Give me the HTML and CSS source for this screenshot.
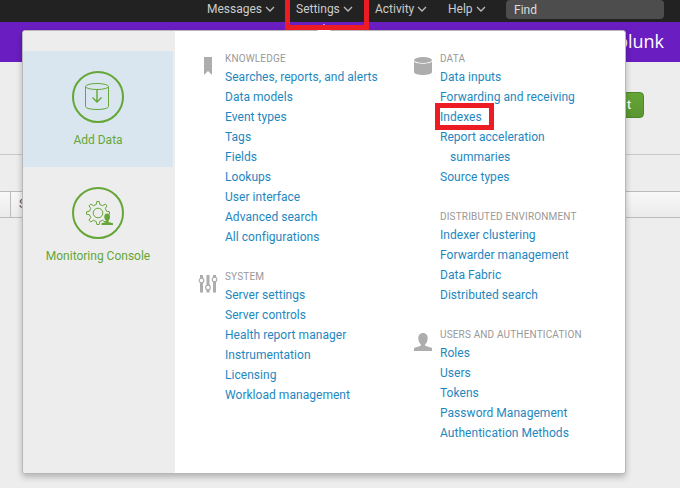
FILE: index.html
```html
<!DOCTYPE html>
<html lang="en">
<head>
<meta charset="utf-8">
<title>Settings</title>
<link rel="stylesheet" href="styles.css">
</head>
<body>
<nav class="topbar">
  <a class="nav-item messages">Messages<svg class="chevron" viewBox="0 0 10 6"><path d="M1 1l4 4 4-4"/></svg></a>
  <a class="nav-item settings">Settings<svg class="chevron" viewBox="0 0 10 6"><path d="M1 1l4 4 4-4"/></svg></a>
  <a class="nav-item activity">Activity<svg class="chevron" viewBox="0 0 10 6"><path d="M1 1l4 4 4-4"/></svg></a>
  <a class="nav-item help">Help<svg class="chevron" viewBox="0 0 10 6"><path d="M1 1l4 4 4-4"/></svg></a>
  <div class="find">Find</div>
</nav>
<header class="appbar">plunk</header>
<section class="toolbar"><button class="action">t</button></section>
<div class="table-head"><span class="cell-first"></span><span class="cell">S</span></div>

<div class="menu">
  <aside class="side">
    <a class="tile active">
      <svg class="tile-icon" viewBox="0 0 52 52"><circle class="ring" cx="26" cy="26" r="25"/><g class="thin"><ellipse cx="25" cy="15.5" rx="11.5" ry="3"/><path d="M13.5 15.500v20c0 4 23 4 23 0v-20"/></g><path class="mid" d="M25 18.500v12M20.500 26.500l4.500 4.500 4.500-4.500"/></svg>
      <span>Add Data</span>
    </a>
    <a class="tile">
      <svg class="tile-icon" viewBox="0 0 52 52"><circle class="ring" cx="26" cy="26" r="25"/><g class="thin"><path d="M24.200 17.500l.6-3h2.400l.6 3 2.800 1.200 2.600-1.700 1.800 1.800-1.700 2.600 1.200 2.800 3 .6v2.400l-3 .6-1.200 2.800 1.700 2.600-1.800 1.800-2.600-1.700-2.800 1.200-.6 3h-2.400l-.6-3-2.800-1.200-2.600 1.700-1.800-1.800 1.700-2.600-1.200-2.800-3-.6v-2.400l3-.6 1.200-2.800-1.700-2.600 1.800-1.800 2.600 1.700z"/><circle cx="26" cy="26" r="4.800"/></g><path class="person" d="M32.300 29.500c0-4 5.700-4 5.700 0 0 2-.6 3.500-1.500 4.300v1.200l4.500 1.200V38H29.500v-1.800l4.500-1.200v-1.200c-1-.8-1.700-2.300-1.700-4.300z"/></svg>
      <span>Monitoring Console</span>
    </a>
  </aside>
  <div class="column">
    <section class="group">
      <svg class="group-icon" viewBox="0 0 20 20"><path d="M6 1h8v18l-4-4-4 4z"/></svg>
      <div class="links">
        <h2>KNOWLEDGE</h2>
        <a>Searches, reports, and alerts</a><a>Data models</a><a>Event types</a><a>Tags</a><a>Fields</a><a>Lookups</a><a>User interface</a><a>Advanced search</a><a>All configurations</a>
      </div>
    </section>
    <section class="group">
      <svg class="group-icon" viewBox="0 0 20 20"><path d="M2 1h3v17.500H2zM8.500 1h3v17.500h-3zM15 1h3v17.500h-3z"/><g class="knob"><circle cx="3.500" cy="6.500" r="2.300"/><circle cx="10" cy="13.500" r="2.300"/><circle cx="16.500" cy="5.500" r="2.300"/></g></svg>
      <div class="links">
        <h2>SYSTEM</h2>
        <a>Server settings</a><a>Server controls</a><a>Health report manager</a><a>Instrumentation</a><a>Licensing</a><a>Workload management</a>
      </div>
    </section>
  </div>
  <div class="column">
    <section class="group">
      <svg class="group-icon" viewBox="0 0 20 20"><ellipse cx="10" cy="4" rx="9" ry="3"/><path d="M1 5.600c2 2.900 16 2.900 18 0V16c0 4-18 4-18 0z"/></svg>
      <div class="links">
        <h2>DATA</h2>
        <a>Data inputs</a><a>Forwarding and receiving</a><a class="marked">Indexes</a><a>Report acceleration</a><a class="wrapped">summaries</a><a>Source types</a>
      </div>
    </section>
    <section class="group">
      <span class="group-icon"></span>
      <div class="links">
        <h2>DISTRIBUTED ENVIRONMENT</h2>
        <a>Indexer clustering</a><a>Forwarder management</a><a>Data Fabric</a><a>Distributed search</a>
      </div>
    </section>
    <section class="group">
      <svg class="group-icon" viewBox="0 0 20 20"><path d="M5.300 6c0-6.600 9.400-6.600 9.400 0 0 3-1 5-2.500 6.200v1.600L19 16v3H1v-3l6.800-2.200v-1.600C6.300 11 5.300 9 5.300 6z"/></svg>
      <div class="links">
        <h2>USERS AND AUTHENTICATION</h2>
        <a>Roles</a><a>Users</a><a>Tokens</a><a>Password Management</a><a>Authentication Methods</a>
      </div>
    </section>
  </div>
</div>
</body>
</html>
```

FILE: styles.css
```css
*, *::before, *::after { box-sizing: border-box; }
body {
  margin: 0;
  height: 488px;
  overflow: hidden;
  position: relative;
  background: #ededed;
  font: 12px/20px Roboto, sans-serif;
}
.topbar {
  display: flex;
  height: 22px;
  padding-left: 207px;
  background: #222;
  color: #ccc;
}
.nav-item { position: relative; display: flex; flex: none; height: 18px; line-height: 18px; }
.messages { width: 89px; }
.settings { width: 79px; }
.activity { width: 73px; }
.help { width: 58px; }
.chevron { width: 10px; height: 6px; margin: 6px 0 0 3px; fill: none; stroke: #bbb; stroke-width: 1.3; }
.settings::after {
  content: "";
  position: absolute;
  z-index: 3;
  left: -11px;
  top: -10px;
  width: 84px;
  height: 40px;
  border: 5px solid #ed1c24;
}
.settings::before {
  content: "";
  position: absolute;
  z-index: 2;
  left: 21px;
  top: 24px;
  border: 7px solid transparent;
  border-top: 0;
  border-bottom-color: #fff;
}
.find {
  width: 158px;
  height: 19px;
  padding-left: 8px;
  border-radius: 4px;
  background: #4d4d4d;
  color: #ddd;
}
.appbar {
  height: 40px;
  padding-right: 16px;
  background: #6a1dc1;
  color: #fff;
  font: 18px/39px "Open Sans", sans-serif;
  text-align: right;
}
.toolbar {
  height: 93px;
  padding: 30px 36px 0 0;
  border-bottom: 1px solid #c9c9c9;
  text-align: right;
}
.action {
  width: 50px;
  height: 26px;
  padding: 0 12px;
  border: 1px solid #4b8a27;
  border-radius: 4px;
  background: linear-gradient(#65a637, #5b9632);
  color: #fff;
  font: 500 12px/22px Roboto, sans-serif;
  text-align: right;
}
.table-head {
  display: flex;
  height: 27px;
  margin-top: 36px;
  border: solid #bcbcbc;
  border-width: 1px 0;
  background: linear-gradient(#f8f8f8, #ebebeb);
  color: #555;
  line-height: 24px;
}
.cell-first { width: 11px; border-right: 1px solid #bcbcbc; }
.cell { padding-left: 8px; }

.menu {
  position: absolute;
  left: 22px;
  top: 30px;
  display: flex;
  width: 604px;
  height: 444px;
  border: 1px solid #b8b8b8;
  border-radius: 3px;
  background: #fff;
  box-shadow: 0 3px 6px rgba(0, 0, 0, .25);
}
.side { width: 152px; padding-top: 20px; background: #ededed; border-radius: 2px 0 0 2px; }
.tile {
  display: flex;
  flex-direction: column;
  align-items: center;
  width: 150px;
  height: 116px;
  padding-top: 20px;
  color: #65a637;
}
.active { background: #d9e6ef; }
.tile-icon { width: 52px; height: 52px; margin-bottom: 7px; fill: none; stroke: #65a637; }
.ring { stroke-width: 2; }
.thin { stroke-width: 1; }
.mid { stroke-width: 1.4; }
.person { fill: #65a637; stroke: none; }
.column { width: 215px; padding: 20px 0 0 23px; }
.group { display: flex; margin-bottom: 22px; }
.group-icon { flex: none; width: 20px; height: 20px; margin: 5px 7px 0 0; fill: #adadad; }
.knob { fill: #fff; stroke: #adadad; stroke-width: 1.2; }
.links {
  display: flex;
  flex-direction: column;
  align-items: flex-start;
  color: #1e87c0;
  letter-spacing: .04px;
  white-space: nowrap;
}
h2 { height: 16px; margin: 0; color: #999; font-size: 10px; font-weight: 400; line-height: 16px; letter-spacing: .16px; }
.wrapped { padding-left: 10px; }
.marked { position: relative; }
.marked::after {
  content: "";
  position: absolute;
  left: -5px;
  top: -4px;
  width: 59px;
  height: 27px;
  border: 5px solid #ed1c24;
}
```
